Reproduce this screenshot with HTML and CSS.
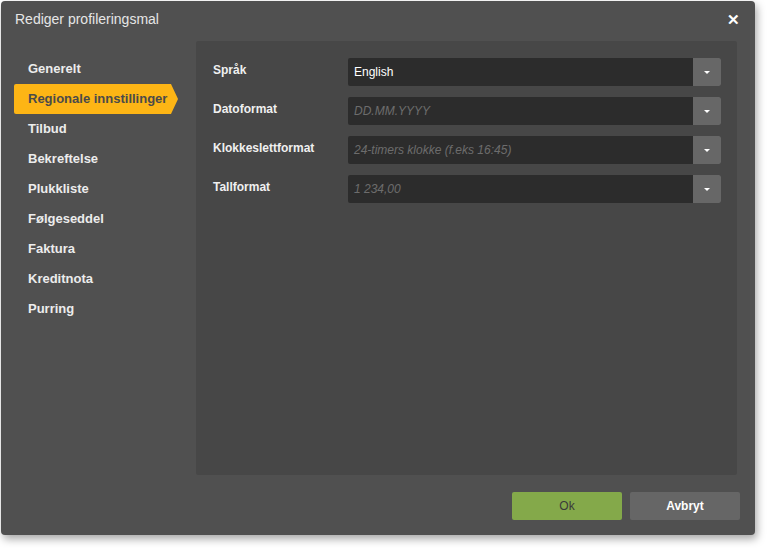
FILE: index.html
```html
<!DOCTYPE html>
<html lang="no">
<head>
  <meta charset="UTF-8" />
  <title>Rediger profileringsmal</title>
  <link rel="stylesheet" href="styles.css">
</head>
<body>
  <div class="dialog">
    <div class="dialog-head">
      <span class="dialog-title">Rediger profileringsmal</span>
      <button class="close-btn">&#x2715;</button>
    </div>
    <div class="dialog-body">
      <ul class="side-nav">
        <li>Generelt</li>
        <li class="active">Regionale innstillinger</li>
        <li>Tilbud</li>
        <li>Bekreftelse</li>
        <li>Plukkliste</li>
        <li>Følgeseddel</li>
        <li>Faktura</li>
        <li>Kreditnota</li>
        <li>Purring</li>
      </ul>
      <div class="panel">
        <div class="form-row">
          <label>Språk</label>
          <div class="select">
            <span class="value">English</span>
            <span class="caret"></span>
          </div>
        </div>
        <div class="form-row">
          <label>Datoformat</label>
          <div class="select">
            <span class="value placeholder">DD.MM.YYYY</span>
            <span class="caret"></span>
          </div>
        </div>
        <div class="form-row">
          <label>Klokkeslettformat</label>
          <div class="select">
            <span class="value placeholder">24-timers klokke (f.eks 16:45)</span>
            <span class="caret"></span>
          </div>
        </div>
        <div class="form-row">
          <label>Tallformat</label>
          <div class="select">
            <span class="value placeholder">1 234,00</span>
            <span class="caret"></span>
          </div>
        </div>
      </div>
    </div>
    <div class="dialog-foot">
      <button class="btn btn-ok">Ok</button>
      <button class="btn btn-cancel">Avbryt</button>
    </div>
  </div>
</body>
</html>
```

FILE: styles.css
```css
body {
  margin: 0;
  background: #fff;
  font-family: 'Liberation Sans', Arial, sans-serif;
  width: 768px;
  height: 548px;
}
.dialog {
  margin: 1px 0 0 1px;
  width: 754px;
  height: 534px;
  background: #505050;
  border-radius: 4px;
  box-shadow: 2px 4px 8px rgba(0, 0, 0, 0.35);
  display: flex;
  flex-direction: column;
  box-sizing: border-box;
}
.dialog-head {
  height: 40px;
  display: flex;
  align-items: center;
  justify-content: space-between;
  padding: 0 15px 0 14px;
}
.dialog-title {
  color: #e6e6e6;
  font-size: 14px;
  margin-top: -4px;
}
.close-btn {
  background: transparent;
  border: none;
  color: #fff;
  font-size: 15px;
  font-weight: bold;
  padding: 0;
  margin-top: -2px;
  cursor: pointer;
}
.dialog-body {
  display: flex;
  height: 434px;
}
.side-nav {
  list-style: none;
  margin: 0;
  padding: 13px 0 0 13px;
  width: 182px;
  box-sizing: border-box;
}
.side-nav li {
  height: 30px;
  line-height: 30px;
  padding-left: 14px;
  color: #ececec;
  font-size: 13px;
  font-weight: bold;
  width: 164px;
  box-sizing: border-box;
}
.side-nav li.active {
  background: #fdb515;
  color: #4a4a4a;
  clip-path: polygon(0 0, 157px 0, 164px 50%, 157px 100%, 0 100%);
  border-radius: 2px 0 0 2px;
}
.panel {
  background: #474747;
  border-radius: 2px;
  width: 541px;
  margin-left: 13px;
  padding: 17px 16px 0 17px;
  box-sizing: border-box;
}
.form-row {
  display: flex;
  align-items: center;
  margin-bottom: 11px;
}
.form-row label {
  width: 135px;
  color: #f0f0f0;
  font-size: 12px;
  font-weight: bold;
  margin-top: -4px;
}
.select {
  flex: 1;
  height: 28px;
  display: flex;
  background: #2c2c2c;
  border-radius: 2px;
  overflow: hidden;
}
.select .value {
  flex: 1;
  padding-left: 6px;
  line-height: 28px;
  font-size: 12px;
  color: #fff;
}
.select .value.placeholder {
  color: #6c6c6c;
  font-style: italic;
}
.select .caret {
  width: 28px;
  background: #676767;
  display: flex;
  align-items: center;
  justify-content: center;
}
.select .caret::after {
  content: "";
  border-left: 3px solid transparent;
  border-right: 3px solid transparent;
  border-top: 3px solid #fff;
}
.dialog-foot {
  display: flex;
  justify-content: flex-end;
  gap: 8px;
  padding: 17px 15px 0 0;
}
.btn {
  width: 110px;
  height: 28px;
  border: none;
  border-radius: 2px;
  font-family: 'Liberation Sans', Arial, sans-serif;
  font-size: 12px;
  cursor: pointer;
}
.btn-ok {
  background: #84a94a;
  color: #3a3a3a;
}
.btn-cancel {
  background: #666;
  color: #fff;
  font-weight: bold;
}
```
